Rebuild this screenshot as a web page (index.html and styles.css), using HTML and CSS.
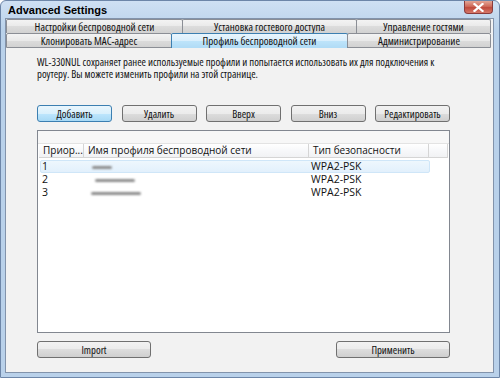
FILE: index.html
```html
<!DOCTYPE html>
<html>
<head>
<meta charset="utf-8">
<link rel="stylesheet" href="styles.css">
</head>
<body>
<div class="window">
  <div class="titlebar">
    <span class="title">Advanced Settings</span>
    <div class="close"><svg width="11" height="9" viewBox="0 0 11 9"><path d="M1.5 1 L9.5 8 M9.5 1 L1.5 8" stroke="#fff" stroke-width="2.2" stroke-linecap="square"/></svg></div>
  </div>
  <div class="client">
    <div class="tabrow row1">
      <div class="tab t1">Настройки беспроводной сети</div>
      <div class="tab t2">Установка гостевого доступа</div>
      <div class="tab t3">Управление гостями</div>
    </div>
    <div class="tabrow row2">
      <div class="tab t4">Клонировать MAC-адрес</div>
      <div class="tab t5 active">Профиль беспроводной сети</div>
      <div class="tab t6">Администрирование</div>
    </div>
    <div class="panel">
      <p class="desc">WL-330NUL сохраняет ранее используемые профили и попытается использовать их для подключения к<br>роутеру. Вы можете изменить профили на этой странице.</p>
      <div class="btnrow">
        <button class="btn focus">Добавить</button>
        <button class="btn">Удалить</button>
        <button class="btn">Вверх</button>
        <button class="btn">Вниз</button>
        <button class="btn">Редактировать</button>
      </div>
      <div class="list">
        <div class="listtop"></div>
        <div class="header">
          <div class="hc c1">Приор...</div>
          <div class="hc c2">Имя профиля беспроводной сети</div>
          <div class="hc c3">Тип безопасности</div>
          <div class="hc c4"></div>
        </div>
        <div class="row selected">
          <div class="cell c1">1</div>
          <div class="cell c2"><span class="smudge s1"></span></div>
          <div class="cell c3">WPA2-PSK</div>
        </div>
        <div class="row">
          <div class="cell c1">2</div>
          <div class="cell c2"><span class="smudge s2"></span></div>
          <div class="cell c3">WPA2-PSK</div>
        </div>
        <div class="row">
          <div class="cell c1">3</div>
          <div class="cell c2"><span class="smudge s3"></span></div>
          <div class="cell c3">WPA2-PSK</div>
        </div>
      </div>
      <div class="bottomrow">
        <button class="btn wide">Import</button>
        <button class="btn wide">Применить</button>
      </div>
    </div>
  </div>
</div>
</body>
</html>
```
FILE: styles.css
```css
html, body { margin: 0; padding: 0; background: #fff; }
body { font-family: "Open Sans", "DejaVu Sans", sans-serif; font-stretch: 75%; font-size: 10.7px; color: #111; }

.window {
  width: 500px; height: 378px; box-sizing: border-box;
  border: 1px solid #6d86a8;
  border-radius: 6px 6px 0 0;
  background: linear-gradient(#cfe0f3, #b9d1ea 30px, #b9d1ea);
  display: flex; flex-direction: column;
}
.titlebar {
  height: 17px; display: flex; justify-content: space-between; align-items: flex-start;
  padding-left: 7px;
}
.title { font-family: "Liberation Sans", Arial, sans-serif; font-stretch: normal; font-weight: bold; font-size: 11px; line-height: 18px; color: #000; }
.close {
  width: 29px; height: 13px; margin-right: 6px; box-sizing: border-box;
  border: 1px solid #8a3b3b; border-top: none; border-radius: 0 0 4px 4px;
  background: linear-gradient(#e3a696, #cf6a5a 45%, #c04a3c 55%, #d6796a);
  display: flex; align-items: center; justify-content: center;
}
.close svg { display: block; }

.client {
  flex: 1; margin: 0 5px 4px 4px;
  border: 1px solid #8293ab;
  background: #f2f2f2;
  display: flex; flex-direction: column;
}
.tabrow { display: flex; height: 14px; padding-right: 1px; }
.row2 { height: 15px; }
.tab {
  box-sizing: border-box; height: 100%;
  border: 1px solid #8b8e95; border-bottom: none;
  margin-right: -1px;
  border-radius: 2px 2px 0 0;
  background: linear-gradient(#f3f3f3, #e9e9e9 50%, #dcdcdc 50%, #d2d2d2);
  text-align: center; line-height: 13px; color: #111;
  white-space: nowrap; font-size: 11px;
}
.row2 .tab { border-bottom: 1px solid #8b8e95; line-height: 13px; }
.row2 .tab.active {
  border-color: #3c7fb1; border-bottom: none;
  background: linear-gradient(#e9f5fd, #d8eefc 50%, #bee4fa 50%, #b0dbf6);
}
.t1 { width: 177px; }
.t2 { width: 175px; }
.t3 { width: 135px; }
.t4 { width: 166px; }
.t5 { width: 177px; }
.t6 { width: 144px; }

.panel {
  flex: 1; padding: 8px 43px 0 31px;
  display: flex; flex-direction: column;
}
.desc { margin: 0; line-height: 12px; white-space: nowrap; }

.btnrow { display: flex; justify-content: space-between; margin-top: 25px; }
.btn {
  font-family: inherit; font-stretch: inherit; font-size: 10.7px; color: #111;
  width: 75px; height: 17px; padding: 0; margin: 0;
  box-sizing: border-box;
  border: 1px solid #707070; border-radius: 3px;
  background: linear-gradient(#f2f2f2, #ebebeb 50%, #dddddd 50%, #cfcfcf);
  line-height: 14px;
}
.btn.focus {
  border-color: #3c7fb1;
  background: linear-gradient(#eaf6fd, #d9f0fc 50%, #bee6fd 50%, #a7d9f5);
}
.btn.wide { width: 114px; }

.list {
  margin-top: 8px; height: 203px; box-sizing: border-box;
  border: 1px solid #828790; background: #fff;
  padding: 0 1px;
}
.listtop { height: 12px; background: #f7f7f7; margin: 0 -1px; border-bottom: 1px solid #e3e3e3; }
.header { display: flex; height: 14px; }
.hc {
  box-sizing: border-box; height: 14px;
  border-right: 1px solid #d5d5d5; border-bottom: 1px solid #d5d5d5;
  background: linear-gradient(#ffffff, #f7f8fa 50%, #f1f2f4);
  padding-left: 4px; line-height: 13px; white-space: nowrap;
  font-size: 10px; font-stretch: 88%;
}
.c1 { width: 45px; }
.c2 { width: 225px; }
.c3 { width: 120px; }
.c4 { width: 19px; }
.row {
  display: flex; height: 13px; box-sizing: border-box;
  border: 1px solid transparent; width: 390px; margin-left: 1px;
}
.row.selected {
  margin-top: 2px;
  border-color: #cfe6f8; border-radius: 2px;
  background: linear-gradient(#eef7fd, #e2f0fc);
}
.cell { line-height: 11px; white-space: nowrap; font-size: 10.5px; font-stretch: 90%; }
.row .c1 { width: 43px; padding-left: 1px; }
.row .c2 { width: 226px; }
.row .c3 { width: 110px; }
.smudge {
  display: block; height: 3px; margin-top: 5px;
  background: #8c8c8c; filter: blur(1.3px); border-radius: 2px;
}
.s1 { width: 20px; margin-left: 7px; }
.s2 { width: 40px; margin-left: 10px; }
.s3 { width: 50px; margin-left: 6px; }

.bottomrow { display: flex; justify-content: space-between; margin-top: 8px; }
```
